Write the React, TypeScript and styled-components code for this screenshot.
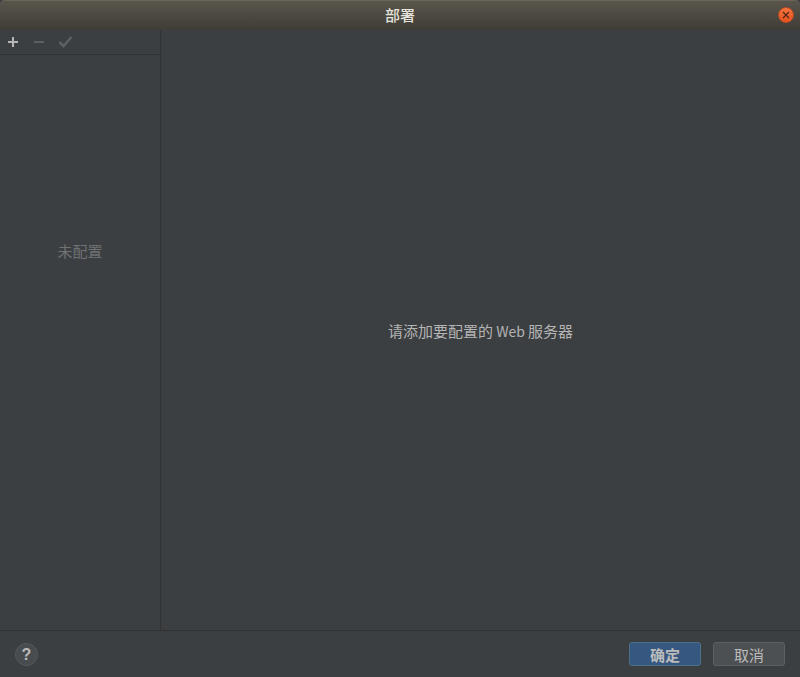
import { FC } from 'react';
import styled, { createGlobalStyle } from 'styled-components';

const GlobalStyle = createGlobalStyle`
  html, body {
    margin: 0;
    padding: 0;
    background-color: #3c3f41;
  }

  body {
    font-family: "Noto Sans CJK SC", "Liberation Sans", sans-serif;
  }
`;

const Dialog = styled.div`
  width: 800px;
  height: 677px;
  display: flex;
  flex-direction: column;
  overflow: hidden;
  background-color: #3c3f41;
  color: #bbbbbb;
`;

const TitleBar = styled.header`
  height: 30px;
  flex-shrink: 0;
  position: relative;
  display: flex;
  justify-content: center;
  box-sizing: border-box;
  border-top: 1px solid #6b665c;
  border-radius: 5px 5px 0 0;
  background: linear-gradient(#59554c, #3f3d37);
`;

const Title = styled.h1`
  margin: 0;
  font-size: 15px;
  font-weight: 500;
  line-height: 28px;
  color: #e6e3dc;
`;

const CloseButton = styled.button`
  position: absolute;
  top: 6px;
  right: 6px;
  width: 16px;
  height: 16px;
  padding: 0;
  display: flex;
  align-items: center;
  justify-content: center;
  border: 1px solid #c04a20;
  border-radius: 50%;
  background: linear-gradient(#f4743f, #e4521f);
`;

const Body = styled.div`
  flex: 1;
  min-height: 0;
  display: flex;
`;

const Sidebar = styled.aside`
  width: 161px;
  flex-shrink: 0;
  box-sizing: border-box;
  display: flex;
  flex-direction: column;
  border-right: 1px solid #323232;
`;

const Toolbar = styled.div`
  height: 25px;
  flex-shrink: 0;
  box-sizing: border-box;
  display: flex;
  align-items: center;
  gap: 10px;
  padding-left: 6px;
  border-bottom: 1px solid #323232;
`;

const ToolIcon = styled.svg`
  width: 16px;
  height: 16px;
  display: block;
`;

const EmptyList = styled.div`
  flex: 1;
  display: flex;
  justify-content: center;
  padding-top: 185px;
  font-size: 15px;
  line-height: 22px;
  color: #6f7173;
`;

const Content = styled.main`
  flex: 1;
  display: flex;
  align-items: center;
  justify-content: center;
  font-size: 15px;
  color: #b4b4b4;
`;

const LatinWord = styled.span`
  font-size: 14px;
`;

const Footer = styled.footer`
  height: 47px;
  flex-shrink: 0;
  box-sizing: border-box;
  display: flex;
  align-items: center;
  justify-content: space-between;
  padding: 0 15px;
  border-top: 1px solid #323232;
`;

const HelpButton = styled.button`
  width: 23px;
  height: 23px;
  padding: 0;
  border: 1px solid #56595b;
  border-radius: 50%;
  background-color: #494c4f;
  color: #bbbbbb;
  font-family: "Liberation Sans", sans-serif;
  font-size: 16px;
  font-weight: 700;
  line-height: 21px;
`;

const Actions = styled.div`
  display: flex;
  gap: 12px;
`;

const ActionButton = styled.button<{ $primary?: boolean }>`
  width: 72px;
  height: 24px;
  padding: 1px 0 0;
  box-sizing: border-box;
  border: 1px solid ${({ $primary }) => ($primary ? '#4c708c' : '#5e6060')};
  border-radius: 3px;
  background-color: ${({ $primary }) => ($primary ? '#365880' : '#4c5052')};
  color: #bbbbbb;
  font-family: inherit;
  font-size: 15px;
  font-weight: ${({ $primary }) => ($primary ? 700 : 400)};
  line-height: 22px;
`;

const App: FC = () => {
  return (
    <Dialog>
      <GlobalStyle />
      <TitleBar>
        <Title>部署</Title>
        <CloseButton aria-label='关闭'>
          <svg width='8' height='8' viewBox='0 0 8 8'>
            <path d='M1 1 L7 7 M7 1 L1 7' stroke='#4a2415' strokeWidth='1.1' />
          </svg>
        </CloseButton>
      </TitleBar>
      <Body>
        <Sidebar>
          <Toolbar>
            <ToolIcon viewBox='0 0 16 16'>
              <path d='M2 8 H12 M7 3 V13' stroke='#b4b6b8' strokeWidth='2' fill='none' />
            </ToolIcon>
            <ToolIcon viewBox='0 0 16 16'>
              <path d='M2 8 H12' stroke='#5c5f61' strokeWidth='2' fill='none' />
            </ToolIcon>
            <ToolIcon viewBox='0 0 16 16'>
              <path d='M1.5 8 L5.5 12 L13.5 3' stroke='#5c5f61' strokeWidth='2.6' fill='none' />
            </ToolIcon>
          </Toolbar>
          <EmptyList>未配置</EmptyList>
        </Sidebar>
        <Content>
          <span>请添加要配置的<LatinWord> Web </LatinWord>服务器</span>
        </Content>
      </Body>
      <Footer>
        <HelpButton>?</HelpButton>
        <Actions>
          <ActionButton $primary>确定</ActionButton>
          <ActionButton>取消</ActionButton>
        </Actions>
      </Footer>
    </Dialog>
  );
};

export default App;
